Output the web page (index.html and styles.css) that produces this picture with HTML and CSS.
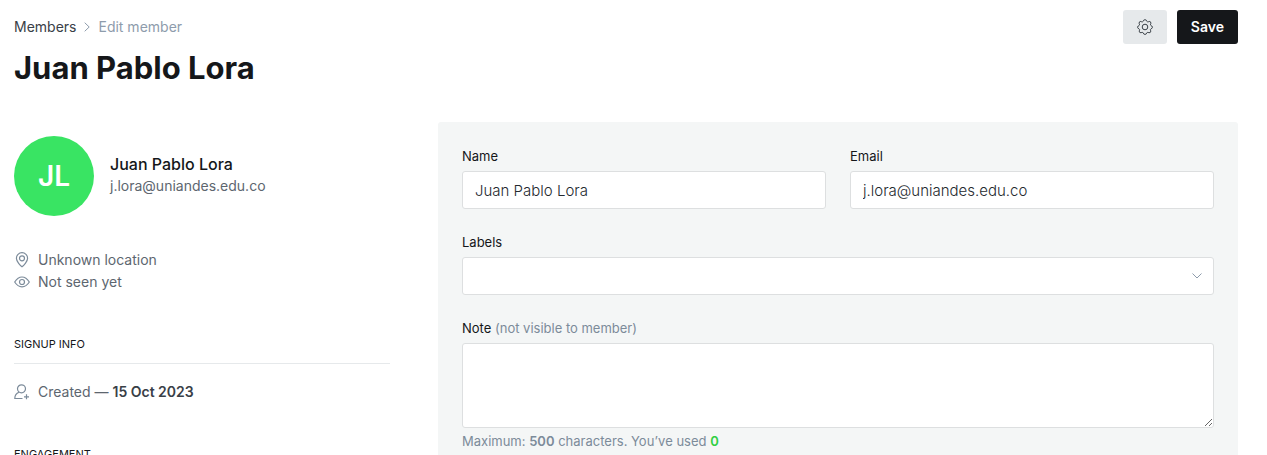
FILE: index.html
```html
<!DOCTYPE html>
<html lang="en">
<head>
<meta charset="utf-8">
<meta name="viewport" content="width=device-width, initial-scale=1">
<title>Edit member</title>
<link rel="stylesheet" href="styles.css">
</head>
<body>
<main class="page">
  <header class="page-header">
    <div class="heading">
      <nav class="breadcrumb" aria-label="Breadcrumb">
        <a class="breadcrumb-link" href="#">Members</a>
        <svg class="breadcrumb-arrow" viewBox="0 0 6 10" aria-hidden="true"><path d="M.7.7 5.2 5 .7 9.3"/></svg>
        <span>Edit member</span>
      </nav>
      <h1 class="title">Juan Pablo Lora</h1>
    </div>
    <div class="actions">
      <button class="button button-icon" type="button" aria-label="Settings">
        <svg class="gear" viewBox="0 0 16 16" aria-hidden="true"><circle cx="8" cy="8" r="2.800"/><path d="M6.600 1.300Q8 0 9.400 1.300L9.700 2.200Q10.300 3.100 11.300 2.800L12.200 2.400Q14 2.400 13.900 4.300L13.500 5.200Q13.200 6.200 14.100 6.600L14.900 7Q16 8.300 14.900 9.400L14 9.800Q13.100 10.300 13.500 11.200L13.800 12.100Q13.700 13.800 12 13.800L11.100 13.400Q10.100 13.100 9.700 14L9.300 14.900Q8 16 6.700 14.900L6.300 14Q5.900 13.100 4.900 13.400L4 13.800Q2.300 13.800 2.200 12.100L2.500 11.200Q2.900 10.300 2 9.800L1.100 9.400Q0 8.300 1.100 7L1.900 6.600Q2.800 6.200 2.500 5.200L2.100 4.300Q2 2.400 3.800 2.400L4.700 2.800Q5.700 3.100 6.300 2.200Z"/></svg>
      </button>
      <button class="button button-primary" type="submit" form="member-form">Save</button>
    </div>
  </header>

  <div class="columns">
    <aside class="sidebar">
      <div class="profile">
        <div class="avatar" aria-hidden="true">JL</div>
        <div class="profile-text">
          <h2 class="profile-name">Juan Pablo Lora</h2>
          <p>j.lora@uniandes.edu.co</p>
        </div>
      </div>
      <ul class="facts">
        <li class="fact">
          <svg class="icon" viewBox="0 0 16 16" aria-hidden="true"><path d="M8 .7a5.600 5.600 0 0 1 5.600 5.600C13.600 9.400 9.500 13.700 8 14.700 6.500 13.700 2.400 9.400 2.400 6.300A5.600 5.600 0 0 1 8 .7z"/><circle cx="8" cy="6.300" r="2.500"/></svg>
          <span>Unknown location</span>
        </li>
        <li class="fact">
          <svg class="icon" viewBox="0 0 16 16" aria-hidden="true"><path d="M.7 8C2.700 4.800 5.200 3 8 3S13.300 4.800 15.300 8C13.300 11.200 10.800 12.800 8 12.800S2.700 11.200 .7 8z"/><circle cx="8" cy="8" r="2.500"/></svg>
          <span>Not seen yet</span>
        </li>
      </ul>
      <section class="section">
        <h3 class="section-title">Signup info</h3>
        <p class="fact">
          <svg class="icon" viewBox="0 0 16 16" aria-hidden="true"><circle cx="7.500" cy="4.800" r="4"/><path d="M5 8.200C2.300 9.200.8 11.400.8 14.500H8.500M12.500 10.300v5M10 12.800h5"/></svg>
          <span>Created — <strong class="fact-value">15 Oct 2023</strong></span>
        </p>
      </section>
      <section class="section">
        <h3 class="section-title">Engagement</h3>
      </section>
    </aside>

    <form class="panel" id="member-form">
      <div class="field-row">
        <div class="field">
          <label class="label" for="name">Name</label>
          <input class="control" id="name" type="text" value="Juan Pablo Lora">
        </div>
        <div class="field">
          <label class="label" for="email">Email</label>
          <input class="control" id="email" type="email" value="j.lora@uniandes.edu.co">
        </div>
      </div>
      <div class="field">
        <label class="label" for="labels">Labels</label>
        <div class="select">
          <select class="control" id="labels"><option value=""></option></select>
          <svg class="select-arrow" viewBox="0 0 12 8" aria-hidden="true"><path d="M1.500 1.500 6 6l4.500-4.500"/></svg>
        </div>
      </div>
      <div class="field">
        <label class="label" for="note">Note <span class="muted">(not visible to member)</span></label>
        <textarea class="control note" id="note" aria-describedby="note-help"></textarea>
        <p class="help" id="note-help">Maximum: <b>500</b> characters. You’ve used <b class="count">0</b></p>
      </div>
    </form>
  </div>
</main>
</body>
</html>
```
FILE: styles.css
```css
* { box-sizing: border-box; }

body,
h1, h2, h3, p, ul { margin: 0; padding: 0; }

body {
  font-family: Inter, "Liberation Sans", sans-serif;
  font-size: 14px;
  line-height: 22px;
  color: #15171a;
  background: #fff;
}

svg { fill: none; stroke: currentColor; }

.page {
  height: 100vh;
  overflow-y: auto;
  scrollbar-width: none;
  padding: 10px 29px 32px 14px;
}

.page-header {
  display: flex;
  justify-content: space-between;
  align-items: flex-start;
  margin-bottom: 34px;
}

.heading { padding-top: 6px; }

.breadcrumb {
  display: flex;
  align-items: center;
  gap: 8px;
  color: #8e9cac;
}

.breadcrumb-link { color: #394047; text-decoration: none; }
.breadcrumb-arrow { width: 6px; height: 10px; }

.title {
  margin-top: 10px;
  font-size: 31px;
  line-height: 40px;
  font-weight: 700;
}

.actions { display: flex; gap: 10px; }

.button {
  height: 34px;
  padding: 0 14px;
  border: 0;
  border-radius: 3px;
  font: 600 14px/20px Inter, "Liberation Sans", sans-serif;
  cursor: pointer;
}

.button-icon {
  display: grid;
  place-items: center;
  color: #394047;
  background: #e6e9eb;
}

.button-primary { color: #fff; background: #15171a; }
.gear { width: 16px; height: 16px; }

.columns {
  display: grid;
  grid-template-columns: repeat(3, minmax(0, 1fr));
  gap: 48px;
}

.sidebar { padding-top: 14px; color: #5d666f; }

.profile { display: flex; align-items: center; gap: 16px; }
.profile-text { padding-bottom: 2px; }

.avatar {
  display: grid;
  place-items: center;
  flex: none;
  width: 80px;
  height: 80px;
  border-radius: 50%;
  font-size: 28px;
  font-weight: 600;
  color: #fff;
  background: #39e463;
}

.profile-name {
  font-size: 16px;
  line-height: 22px;
  font-weight: 500;
  color: #15171a;
}

.facts { list-style: none; margin-top: 33px; }

.fact { display: flex; align-items: center; gap: 8px; }
.fact-value { font-weight: 600; color: #394047; }
.icon { flex: none; width: 16px; height: 16px; color: #7c8b9a; stroke-width: 1.2; }

.section { margin-top: 40px; }

.section-title {
  margin-bottom: 17px;
  padding-bottom: 8px;
  border-bottom: 1px solid #e6e9eb;
  font-size: 11px;
  line-height: 22px;
  font-weight: 400;
  text-transform: uppercase;
  color: #15171a;
}

.panel {
  grid-column: span 2;
  display: grid;
  align-content: start;
  gap: 23px;
  padding: 24px;
  border-radius: 3px;
  background: #f4f6f6;
}

.field-row {
  display: grid;
  grid-template-columns: repeat(2, minmax(0, 1fr));
  gap: 24px;
}

.label {
  display: block;
  margin-bottom: 5px;
  font-size: 13px;
  line-height: 20px;
}

.muted { color: #7c8b9a; }

.control {
  display: block;
  width: 100%;
  height: 38px;
  padding: 0 12px;
  border: 1px solid #dddfe0;
  border-radius: 3px;
  appearance: none;
  font: 300 15px/22px Inter, "Liberation Sans", sans-serif;
  color: #24292e;
  background: #fff;
}

.note { height: 85px; padding: 8px 12px; resize: vertical; }

.select { position: relative; }

.select-arrow {
  position: absolute;
  top: 15px;
  right: 11px;
  width: 12px;
  height: 8px;
  color: #8e9cac;
  pointer-events: none;
}

.help {
  margin-top: 3px;
  font-size: 13px;
  line-height: 20px;
  color: #7c8b9a;
}

.help b { font-weight: 600; }
.help .count { color: #30cf43; }
```
